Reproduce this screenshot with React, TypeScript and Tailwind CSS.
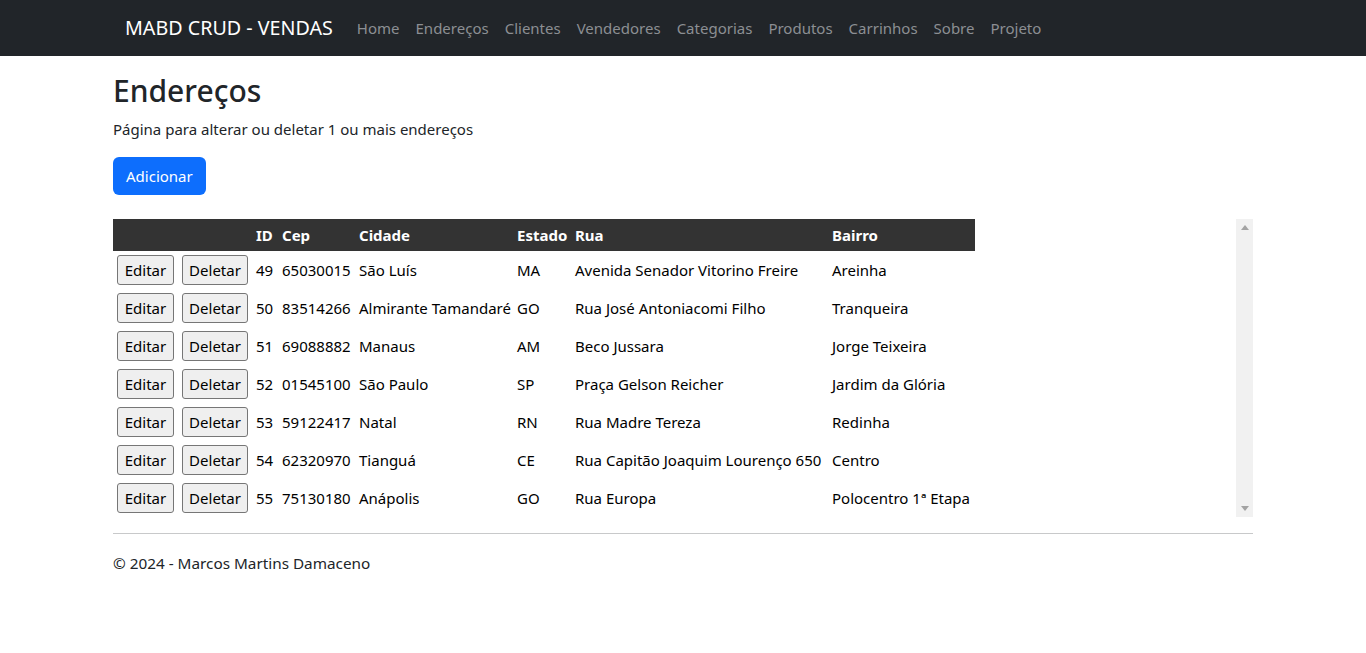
import React from 'react';

interface Endereco {
  id: number;
  cep: string;
  cidade: string;
  estado: string;
  rua: string;
  bairro: string;
}

const enderecos: Endereco[] = [
  { id: 49, cep: '65030015', cidade: 'São Luís', estado: 'MA', rua: 'Avenida Senador Vitorino Freire', bairro: 'Areinha' },
  { id: 50, cep: '83514266', cidade: 'Almirante Tamandaré', estado: 'GO', rua: 'Rua José Antoniacomi Filho', bairro: 'Tranqueira' },
  { id: 51, cep: '69088882', cidade: 'Manaus', estado: 'AM', rua: 'Beco Jussara', bairro: 'Jorge Teixeira' },
  { id: 52, cep: '01545100', cidade: 'São Paulo', estado: 'SP', rua: 'Praça Gelson Reicher', bairro: 'Jardim da Glória' },
  { id: 53, cep: '59122417', cidade: 'Natal', estado: 'RN', rua: 'Rua Madre Tereza', bairro: 'Redinha' },
  { id: 54, cep: '62320970', cidade: 'Tianguá', estado: 'CE', rua: 'Rua Capitão Joaquim Lourenço 650', bairro: 'Centro' },
  { id: 55, cep: '75130180', cidade: 'Anápolis', estado: 'GO', rua: 'Rua Europa', bairro: 'Polocentro 1ª Etapa' },
];

const links = ['Home', 'Endereços', 'Clientes', 'Vendedores', 'Categorias', 'Produtos', 'Carrinhos', 'Sobre', 'Projeto'];

const App: React.FC = () => {
  return (
    <div className="min-h-[653px] bg-white text-[#212529] font-['Noto_Sans',sans-serif] text-[15px] leading-6">
      {/* Navbar */}
      <nav className="h-14 bg-[#212529]">
        <div className="mx-auto flex h-full w-[1140px] items-center px-3">
          <span className="mr-4 py-[5px] text-[19.7px] text-white">MABD CRUD - VENDAS</span>
          <ul className="flex">
            {links.map((link) => (
              <li key={link} className="px-2 py-2 text-[#8c8f93]">
                {link}
              </li>
            ))}
          </ul>
        </div>
      </nav>

      <main className="mx-auto w-[1140px] pt-[17px]">
        <h1 className="mb-2 text-[30px] font-medium leading-9">Endereços</h1>
        <p className="mb-4">Página para alterar ou deletar 1 ou mais endereços</p>
        <button className="h-[38px] rounded-md bg-[#0d6efd] px-[13px] text-white">Adicionar</button>

        {/* Table with scroll area */}
        <div className="mt-6 flex h-[298px]">
          <div className="flex-1 overflow-hidden">
            <table className="w-[862px] table-fixed border-collapse whitespace-nowrap text-black">
              <colgroup>
                <col className="w-[65px]" />
                <col className="w-[74px]" />
                <col className="w-[26px]" />
                <col className="w-[77px]" />
                <col className="w-[158px]" />
                <col className="w-[58px]" />
                <col className="w-[257px]" />
                <col className="w-[147px]" />
              </colgroup>
              <thead>
                <tr className="h-8 bg-[#333333] text-left font-bold text-white">
                  <th className="px-1"></th>
                  <th className="px-1"></th>
                  <th className="px-1">ID</th>
                  <th className="px-1">Cep</th>
                  <th className="px-1">Cidade</th>
                  <th className="px-1">Estado</th>
                  <th className="px-1">Rua</th>
                  <th className="px-1">Bairro</th>
                </tr>
              </thead>
              <tbody>
                {enderecos.map((e) => (
                  <tr key={e.id} className="h-[38px]">
                    <td className="px-1">
                      <button className="h-[30px] w-[57px] rounded-[3px] border border-[#767676] bg-[#efefef]">Editar</button>
                    </td>
                    <td className="px-1">
                      <button className="h-[30px] w-[66px] rounded-[3px] border border-[#767676] bg-[#efefef]">Deletar</button>
                    </td>
                    <td className="px-1">{e.id}</td>
                    <td className="px-1">{e.cep}</td>
                    <td className="px-1">{e.cidade}</td>
                    <td className="px-1">{e.estado}</td>
                    <td className="px-1">{e.rua}</td>
                    <td className="px-1">{e.bairro}</td>
                  </tr>
                ))}
              </tbody>
            </table>
          </div>
          {/* Scrollbar track */}
          <div className="flex w-[17px] flex-col items-center justify-between bg-[#f1f1f1] py-[6px]">
            <svg width="8" height="5" viewBox="0 0 8 5">
              <path d="M0 5 L4 0 L8 5 Z" fill="#a3a3a3" />
            </svg>
            <svg width="8" height="5" viewBox="0 0 8 5">
              <path d="M0 0 L4 5 L8 0 Z" fill="#a3a3a3" />
            </svg>
          </div>
        </div>

        <hr className="mt-4 border-t border-[#c8c9ca]" />
        <footer className="pt-[17px] text-[15.3px]">© 2024 - Marcos Martins Damaceno</footer>
      </main>
    </div>
  );
};

export default App;
